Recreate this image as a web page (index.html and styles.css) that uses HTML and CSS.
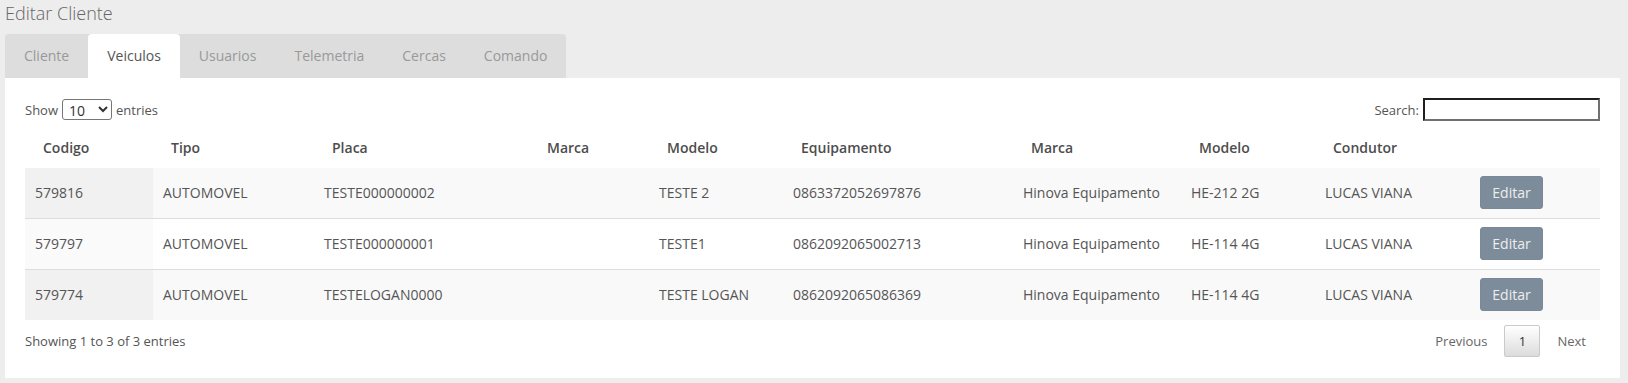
FILE: index.html
```html
<!DOCTYPE html>
<html lang="pt">
<head>
<meta charset="utf-8">
<title>Editar Cliente</title>
<link rel="stylesheet" href="styles.css">
</head>
<body>
<div class="page">
  <h1 class="title">Editar Cliente</h1>
  <div class="tabs">
    <div class="tab">Cliente</div>
    <div class="tab active">Veiculos</div>
    <div class="tab">Usuarios</div>
    <div class="tab">Telemetria</div>
    <div class="tab">Cercas</div>
    <div class="tab">Comando</div>
  </div>
  <div class="panel">
    <div class="controls">
      <label class="length">Show
        <select class="length-select"><option>10</option><option>25</option><option>50</option></select>
        entries</label>
      <label class="search">Search:<input class="search-input" type="text"></label>
    </div>
    <table class="grid">
      <colgroup>
        <col class="c1"><col class="c2"><col class="c3"><col class="c4"><col class="c5">
        <col class="c6"><col class="c7"><col class="c8"><col class="c9"><col class="c10">
      </colgroup>
      <thead>
        <tr>
          <th>Codigo</th><th>Tipo</th><th>Placa</th><th>Marca</th><th>Modelo</th>
          <th>Equipamento</th><th>Marca</th><th>Modelo</th><th>Condutor</th><th></th>
        </tr>
      </thead>
      <tbody>
        <tr class="odd">
          <td class="sorted">579816</td><td>AUTOMOVEL</td><td>TESTE000000002</td><td></td><td>TESTE 2</td>
          <td>0863372052697876</td><td>Hinova Equipamento</td><td>HE-212 2G</td><td>LUCAS VIANA</td>
          <td><button class="btn-edit">Editar</button></td>
        </tr>
        <tr class="even">
          <td class="sorted">579797</td><td>AUTOMOVEL</td><td>TESTE000000001</td><td></td><td>TESTE1</td>
          <td>0862092065002713</td><td>Hinova Equipamento</td><td>HE-114 4G</td><td>LUCAS VIANA</td>
          <td><button class="btn-edit">Editar</button></td>
        </tr>
        <tr class="odd">
          <td class="sorted">579774</td><td>AUTOMOVEL</td><td>TESTELOGAN0000</td><td></td><td>TESTE LOGAN</td>
          <td>0862092065086369</td><td>Hinova Equipamento</td><td>HE-114 4G</td><td>LUCAS VIANA</td>
          <td><button class="btn-edit">Editar</button></td>
        </tr>
      </tbody>
    </table>
    <div class="footer">
      <div class="info">Showing 1 to 3 of 3 entries</div>
      <div class="paginate">
        <span class="page-btn disabled">Previous</span>
        <span class="page-btn current">1</span>
        <span class="page-btn disabled">Next</span>
      </div>
    </div>
  </div>
</div>
</body>
</html>
```
FILE: styles.css
```css
* { box-sizing: border-box; }
html, body {
  margin: 0;
  background: #ededed;
  font-family: "Open Sans", "Liberation Sans", sans-serif;
  color: #555;
}
.page {
  padding: 0 8px 0 5px;
}
.title {
  margin: 0;
  height: 34px;
  line-height: 27px;
  font-size: 18px;
  font-weight: 300;
  color: #666;
}
.tabs {
  display: inline-flex;
  height: 44px;
  background: #dddddd;
  border-radius: 4px 4px 0 0;
  vertical-align: top;
}
.tab {
  padding: 0 19px;
  line-height: 44px;
  font-size: 14px;
  color: #999;
  border-radius: 4px 4px 0 0;
}
.tab.active {
  background: #fff;
  color: #555;
}
.panel {
  background: #fff;
  padding: 20px 20px 21px 20px;
}
.controls {
  display: flex;
  justify-content: space-between;
  align-items: center;
  height: 23px;
  font-size: 13px;
  color: #555;
}
.length {
  display: flex;
  align-items: center;
  gap: 4px;
}
.length-select {
  width: 50px;
  height: 21px;
  font-family: "Open Sans", "Liberation Sans", sans-serif;
  font-size: 14px;
  color: #333;
  border: 1px solid #767676;
  border-radius: 3px;
  background: #fff;
  padding: 0 2px;
}
.search {
  display: flex;
  align-items: center;
  gap: 4px;
}
.search-input {
  width: 177px;
  height: 23px;
  border-style: solid;
  border-width: 2px;
  border-color: #1f1f1f #707070 #707070 #1f1f1f;
  background: #fff;
  padding: 0 3px;
}
.grid {
  width: 100%;
  margin-top: 6px;
  border-collapse: collapse;
  table-layout: fixed;
  font-size: 14px;
}
.c1 { width: 128px; }
.c2 { width: 161px; }
.c3 { width: 215px; }
.c4 { width: 120px; }
.c5 { width: 134px; }
.c6 { width: 230px; }
.c7 { width: 168px; }
.c8 { width: 134px; }
.c9 { width: 155px; }
.c10 { width: 130px; }
.grid th {
  text-align: left;
  padding: 10px 18px;
  line-height: 21px;
  font-weight: 600;
  color: #4d4d4d;
  white-space: nowrap;
}
.grid td {
  padding: 8px 10px;
  height: 50px;
  color: #555;
  white-space: nowrap;
}
.grid tbody tr + tr td {
  height: 51px;
  border-top: 1px solid #dddddd;
}
.grid tr.odd td { background: #f9f9f9; }
.grid tr.odd td.sorted { background: #f1f1f1; }
.grid tr.even td { background: #fff; }
.grid tr.even td.sorted { background: #fafafa; }
.btn-edit {
  width: 63px;
  height: 33px;
  border: 1px solid #7a8997;
  border-radius: 3px;
  background: #7d8c9a;
  color: #eeeeee;
  font-family: "Open Sans", "Liberation Sans", sans-serif;
  font-size: 14px;
  padding: 0;
}
.footer {
  margin-top: 5px;
  height: 32px;
  display: flex;
  justify-content: space-between;
  align-items: center;
}
.info {
  font-size: 13px;
  color: #555;
}
.paginate {
  display: flex;
  align-items: center;
  gap: 3px;
}
.page-btn {
  display: inline-block;
  font-size: 13px;
  padding: 0 13px;
  line-height: 30px;
  color: #666;
  border: 1px solid transparent;
  border-radius: 2px;
}
.page-btn.current {
  color: #333;
  border-color: #cacaca;
  background: linear-gradient(to bottom, #ffffff 0%, #dcdcdc 100%);
  width: 36px;
  height: 32px;
  text-align: center;
  padding: 0;
}
```
